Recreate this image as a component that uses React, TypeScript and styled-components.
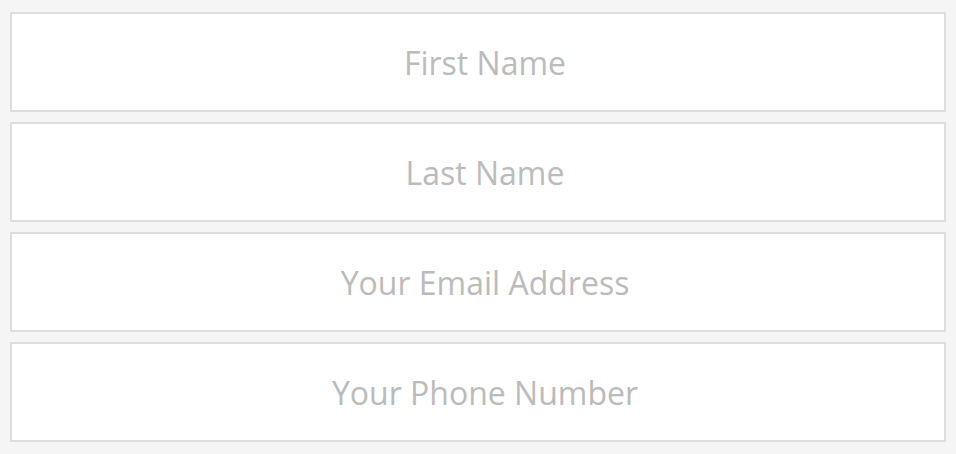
import styled, { createGlobalStyle } from "styled-components";

const GlobalStyle = createGlobalStyle`
  html, body {
    margin: 0;
    padding: 0;
    background: #f5f5f5;
  }
`;

const Form = styled.form`
  display: flex;
  flex-direction: column;
  gap: 10px;
  padding: 12px 10px;
`;

const Field = styled.input`
  box-sizing: border-box;
  display: block;
  width: 100%;
  height: 100px;
  margin: 0;
  padding: 0 10px 0 24px;
  border: 2px solid #dddddd;
  border-radius: 0;
  background: #ffffff;
  font-family: "Open Sans", "Liberation Sans", sans-serif;
  font-size: 32px;
  color: #555555;
  text-align: center;
  outline: none;

  &::placeholder {
    color: #bbbbbb;
    opacity: 1;
  }
`;

const fields = [
  { name: "firstName", type: "text", placeholder: "First Name" },
  { name: "lastName", type: "text", placeholder: "Last Name" },
  { name: "email", type: "email", placeholder: "Your Email Address" },
  { name: "phone", type: "tel", placeholder: "Your Phone Number" },
];

const App = () => (
  <>
    <GlobalStyle />
    <Form onSubmit={(e) => e.preventDefault()}>
      {fields.map((f) => (
        <Field key={f.name} name={f.name} type={f.type} placeholder={f.placeholder} />
      ))}
    </Form>
  </>
);

export default App;
